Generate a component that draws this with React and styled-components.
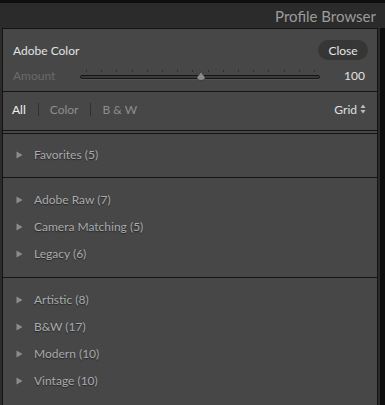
import React from "react";
import styled, { createGlobalStyle } from "styled-components";

const Global = createGlobalStyle`
  html, body { margin: 0; padding: 0; background: #2b2b2b; }
  body { font-family: Lato, "Open Sans", Arial, sans-serif; }
`;

const Frame = styled.div`
  width: 385px;
  height: 405px;
  box-sizing: border-box;
  border-top: 3px solid #0e0e0e;
  background: #2b2b2b;
  display: flex;
  flex-direction: column;
  overflow: hidden;
`;

const TitleBar = styled.div`
  height: 25px;
  flex: none;
  display: flex;
  align-items: center;
  justify-content: flex-end;
  padding-right: 9px;
  font-size: 15px;
  color: #9c9c9c;
`;

const Body = styled.div`
  flex: 1;
  display: flex;
  padding-left: 2px;
  min-height: 0;
`;

const Column = styled.div`
  width: 376px;
  box-sizing: border-box;
  background: #474747;
  border: 1px solid #141414;
  border-bottom: none;
  display: flex;
  flex-direction: column;
`;

const Gutter = styled.div`
  width: 2px;
  background: #2b2b2b;
`;

const ScrollStrip = styled.div`
  flex: 1;
  background: #0e0e0e;
`;

const Divider = styled.div`
  height: 1px;
  flex: none;
  background: #141414;
  margin-top: ${(p) => p.$gap || 0}px;
`;

const ProfilePanel = styled.div`
  height: 62px;
  box-sizing: border-box;
  padding: 11px 10px 0 10px;
  display: flex;
  flex-direction: column;
  gap: 7px;
`;

const Row = styled.div`
  display: flex;
  align-items: center;
  justify-content: space-between;
  height: ${(p) => p.$h}px;
`;

const ProfileName = styled.span`
  font-size: 12px;
  color: #e2e2e2;
`;

const CloseButton = styled.button`
  width: 50px;
  height: 20px;
  border: none;
  border-radius: 10px;
  background: #363636;
  color: #e6e6e6;
  font-family: inherit;
  font-size: 12px;
  padding: 0;
  margin-right: -1px;
`;

const AmountLabel = styled.span`
  flex: none;
  width: 67px;
  font-size: 12px;
  color: #6a6a6a;
`;

const Track = styled.div`
  position: relative;
  flex: none;
  width: 240px;
  height: 16px;
`;

const TrackLine = styled.div`
  position: absolute;
  left: 0;
  right: 0;
  top: 8px;
  height: 4px;
  box-sizing: border-box;
  border-radius: 2px;
  background: #3a3a3a;
  border: 1px solid #161616;
  box-shadow: 0 1px 0 #555;
`;

const Tick = styled.div`
  position: absolute;
  top: 3px;
  width: 1px;
  height: 2px;
  background: #2e2e2e;
`;

const Thumb = styled.svg`
  position: absolute;
  left: 116px;
  top: 4px;
`;

const AmountValue = styled.span`
  flex: 1;
  text-align: right;
  font-size: 12px;
  color: #e2e2e2;
  margin-right: 2px;
`;

const FilterBar = styled.div`
  height: 38px;
  box-sizing: border-box;
  display: flex;
  align-items: center;
  padding: 0 11px 4px 9px;
  font-size: 12px;
`;

const FilterTab = styled.span`
  color: ${(p) => (p.$active ? "#f0f0f0" : "#8e8e8e")};
`;

const FilterSep = styled.span`
  width: 1px;
  height: 13px;
  background: #303030;
  margin: 0 11px 0 12px;
`;

const Spacer = styled.div`
  flex: 1;
`;

const ViewSelect = styled.span`
  display: flex;
  align-items: center;
  gap: 3px;
  color: #e0e0e0;
`;

const Group = styled.div`
  padding: ${(p) => p.$pt}px 0 ${(p) => p.$pb}px 0;
  display: flex;
  flex-direction: column;
`;

const Item = styled.div`
  height: 27px;
  display: flex;
  align-items: center;
  padding-left: 13px;
  gap: 11px;
  font-size: 12px;
  color: #a9abae;
  text-shadow: 0 1px 1px #262626;
`;

const Arrow = styled.svg`
  flex: none;
`;

const Tri = () => (
  <Arrow width="7" height="8" viewBox="0 0 7 8">
    <path d="M0.5 0.5 L6.5 4 L0.5 7.5 Z" fill="#8c8c8c" />
  </Arrow>
);

const groups = [
  { pt: 7, pb: 9, items: ["Favorites (5)"] },
  { pt: 8, pb: 10, items: ["Adobe Raw (7)", "Camera Matching (5)", "Legacy (6)"] },
  { pt: 8, pb: 8, items: ["Artistic (8)", "B&W (17)", "Modern (10)", "Vintage (10)"] },
];

export default function App() {
  const ticks = Array.from({ length: 16 }, (_, i) => 6 + i * 15.2);
  return (
    <>
      <Global />
      <Frame>
        <TitleBar>Profile Browser</TitleBar>
        <Body>
          <Column>
            <ProfilePanel>
              <Row $h={20}>
                <ProfileName>Adobe Color</ProfileName>
                <CloseButton>Close</CloseButton>
              </Row>
              <Row $h={16}>
                <AmountLabel>Amount</AmountLabel>
                <Track>
                  {ticks.map((x, i) => (
                    <Tick key={i} style={{ left: `${Math.round(x)}px` }} />
                  ))}
                  <TrackLine />
                  <Thumb width="10" height="10" viewBox="0 0 10 10">
                    <path d="M5 0.5 L6.5 3 L9 6 Q9.5 9 5 9.5 Q0.5 9 1 6 L3.5 3 Z" fill="#8a8a8a" stroke="#2a2a2a" strokeWidth="0.6" />
                  </Thumb>
                </Track>
                <AmountValue>100</AmountValue>
              </Row>
            </ProfilePanel>
            <Divider />
            <FilterBar>
              <FilterTab $active>All</FilterTab>
              <FilterSep />
              <FilterTab>Color</FilterTab>
              <FilterSep />
              <FilterTab>B &amp; W</FilterTab>
              <Spacer />
              <ViewSelect>
                Grid
                <svg width="6" height="10" viewBox="0 0 6 10">
                  <path d="M3 0.5 L5.5 4 L0.5 4 Z M3 9.5 L5.5 6 L0.5 6 Z" fill="#bdbdbd" />
                </svg>
              </ViewSelect>
            </FilterBar>
            <Divider />
            <Divider $gap={2} />
            {groups.map((g, gi) => (
              <React.Fragment key={gi}>
                {gi > 0 && <Divider />}
                <Group $pt={g.pt} $pb={g.pb}>
                  {g.items.map((t) => (
                    <Item key={t}>
                      <Tri />
                      <span>{t}</span>
                    </Item>
                  ))}
                </Group>
              </React.Fragment>
            ))}
          </Column>
          <Gutter />
          <ScrollStrip />
        </Body>
      </Frame>
    </>
  );
}
